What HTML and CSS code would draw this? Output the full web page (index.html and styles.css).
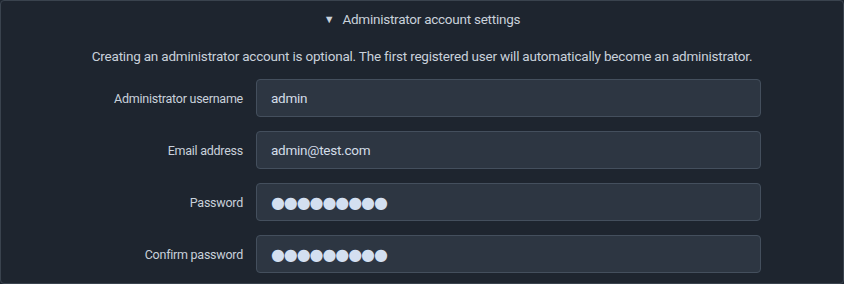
FILE: index.html
```html
<!DOCTYPE html>
<html lang="en">
<head>
<meta charset="UTF-8">
<meta name="viewport" content="width=device-width, initial-scale=1.0">
<title>Administrator account settings</title>
<link rel="stylesheet" href="styles.css">
</head>
<body>

<details class="admin-panel" open>
  <summary class="admin-summary">Administrator account settings</summary>

  <p class="admin-note">Creating an administrator account is optional. The first registered user will automatically become an administrator.</p>

  <div class="admin-form">
    <label class="field-label" for="admin-user">Administrator username</label>
    <input class="field-input" id="admin-user" type="text" value="admin">

    <label class="field-label" for="admin-email">Email address</label>
    <input class="field-input" id="admin-email" type="email" value="admin@test.com">

    <label class="field-label" for="admin-pass">Password</label>
    <input class="field-input masked" id="admin-pass" type="text" value="●●●●●●●●●" readonly>

    <label class="field-label" for="admin-pass2">Confirm password</label>
    <input class="field-input masked" id="admin-pass2" type="text" value="●●●●●●●●●" readonly>
  </div>
</details>

</body>
</html>
```

FILE: styles.css
```css
html, body {
  margin: 0;
  padding: 0;
  background-color: #1e252f;
}

body {
  font-family: 'Roboto', 'Noto Sans', sans-serif;
  font-size: 13.5px;
  letter-spacing: -0.2px;
  color: #c9d1db;
}

.admin-panel {
  box-sizing: border-box;
  height: 284px;
  border: 1px solid #3a434e;
  border-radius: 4px;
  background-color: #1e252f;
}

.admin-summary {
  list-style: none;
  text-align: center;
  padding-top: 8px;
  height: 20px;
  line-height: 20px;
  letter-spacing: -0.25px;
  cursor: pointer;
}

.admin-summary::-webkit-details-marker {
  display: none;
}

.admin-summary::before {
  content: '\25BC';
  font-size: 11px;
  display: inline-block;
  margin-right: 8px;
  vertical-align: 1px;
}

.admin-note {
  margin: 17px 0 0 0;
  line-height: 20px;
  text-align: center;
}

.admin-form {
  display: grid;
  grid-template-columns: 242px 1fr;
  column-gap: 13px;
  row-gap: 14px;
  align-items: center;
  padding-right: 82px;
  margin-top: 13px;
}

.field-label {
  text-align: right;
  font-size: 12.5px;
  letter-spacing: -0.25px;
}

.field-input {
  box-sizing: border-box;
  height: 38px;
  padding: 0 14px;
  background-color: #2d3642;
  border: 1px solid #444f5d;
  border-radius: 4px;
  color: #d3dde8;
  font-family: 'Roboto', 'Noto Sans', sans-serif;
  font-size: 13.5px;
  letter-spacing: -0.25px;
  outline: none;
}

.masked {
  font-family: 'DejaVu Sans', sans-serif;
  font-size: 16px;
  letter-spacing: -1.1px;
  color: #d3dff0;
}
```
